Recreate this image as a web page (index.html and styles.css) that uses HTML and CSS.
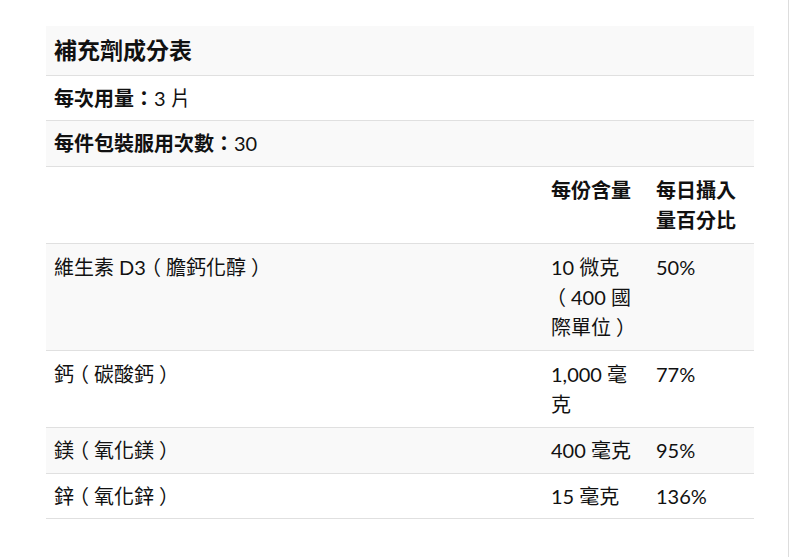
FILE: index.html
```html
<!DOCTYPE html>
<html lang="zh-Hant">
<head>
<meta charset="utf-8">
<title>補充劑成分表</title>
<link rel="stylesheet" href="styles.css">
</head>
<body>
<div class="page">
  <table class="facts">
    <colgroup>
      <col class="c-name">
      <col class="c-amount">
      <col class="c-dv">
    </colgroup>
    <tbody>
      <tr class="shade">
        <th colspan="3" class="title">補充劑成分表</th>
      </tr>
      <tr class="tight">
        <th colspan="3">每次用量<span class="pn">：</span><span class="num">3 片</span></th>
      </tr>
      <tr class="shade single">
        <th colspan="3">每件包裝服用次數<span class="pn">：</span><span class="num">30</span></th>
      </tr>
      <tr>
        <th></th>
        <th>每份含量</th>
        <th>每日攝入量百分比</th>
      </tr>
      <tr class="shade">
        <td>維生素 D3<span class="pn">（</span>膽鈣化醇<span class="pn">）</span></td>
        <td>10 微克<span class="pn">（</span>400 國際單位<span class="pn">）</span></td>
        <td>50%</td>
      </tr>
      <tr>
        <td>鈣<span class="pn">（</span>碳酸鈣<span class="pn">）</span></td>
        <td>1,000 毫克</td>
        <td>77%</td>
      </tr>
      <tr class="shade single">
        <td>鎂<span class="pn">（</span>氧化鎂<span class="pn">）</span></td>
        <td>400 毫克</td>
        <td>95%</td>
      </tr>
      <tr class="tight">
        <td>鋅<span class="pn">（</span>氧化鋅<span class="pn">）</span></td>
        <td>15 毫克</td>
        <td>136%</td>
      </tr>
    </tbody>
  </table>
</div>
</body>
</html>
```

FILE: styles.css
```css
html, body {
  margin: 0;
  padding: 0;
  background: #ffffff;
}

body {
  font-family: Lato, "Noto Sans CJK TC", sans-serif;
  color: #111111;
}

.page {
  box-sizing: border-box;
  width: 789px;
  min-height: 100vh;
  padding: 26px 0 0 46px;
  border-right: 1px solid #dddddd;
  display: flex;
  align-items: flex-start;
}

.facts {
  width: 708px;
  table-layout: fixed;
  border-collapse: collapse;
  font-size: 20px;
  line-height: 30px;
}

.c-name { width: 497px; }
.c-amount { width: 105px; }
.c-dv { width: 106px; }

.facts tr {
  border-bottom: 1px solid #e0e0e0;
}

.facts tr.shade {
  background: #f9f9f9;
}

.facts th,
.facts td {
  padding: 8px 8px;
  text-align: left;
  vertical-align: top;
}

.facts th {
  font-weight: 700;
}

.facts td {
  font-weight: 400;
}

.facts th .num {
  font-weight: 400;
}

/* half-width punctuation glyph, centred in a full em with padding */
.pn {
  font-feature-settings: "halt" 1;
  padding: 0 0.25em;
}

.facts tr.single th,
.facts tr.single td {
  line-height: 29px;
}

.facts tr.tight th,
.facts tr.tight td {
  line-height: 28px;
}

.facts th.title {
  font-size: 23px;
  line-height: 33px;
}
```
